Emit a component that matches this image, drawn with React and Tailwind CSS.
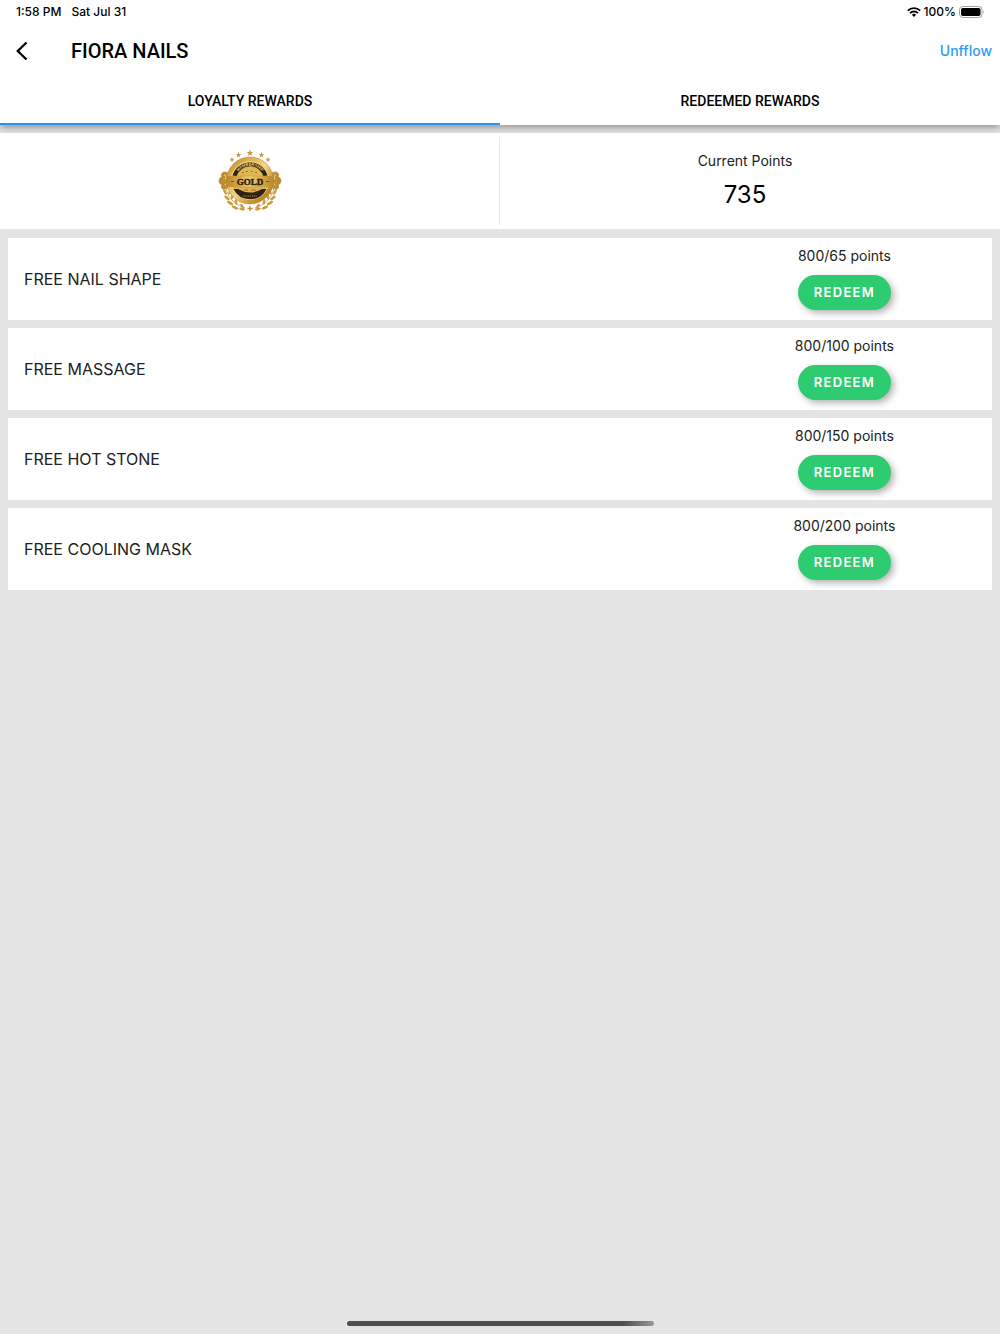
import React, { useState } from 'react';

const TABS = [
  { id: 'loyalty', label: 'LOYALTY REWARDS' },
  { id: 'redeemed', label: 'REDEEMED REWARDS' },
];

const REWARDS = [
  { name: 'FREE NAIL SHAPE', cost: 65 },
  { name: 'FREE MASSAGE', cost: 100 },
  { name: 'FREE HOT STONE', cost: 150 },
  { name: 'FREE COOLING MASK', cost: 200 },
];

const STAR = 'M0 -3.4L0.9 -1.1L3.3 -1L1.4 0.5L2.1 2.9L0 1.5L-2.1 2.9L-1.4 0.5L-3.3 -1L-0.9 -1.1Z';

// One half of the laurel, mirrored for the other side
const Laurel = () => (
  <g fill="#c99a3c">
    <path d="M8 38C9 47 15 55 27 59" fill="none" stroke="#c99a3c" strokeWidth="0.8" />
    <ellipse cx="7" cy="43" rx="1.3" ry="3" transform="rotate(-28 7 43)" />
    <ellipse cx="12" cy="43" rx="1.2" ry="2.8" transform="rotate(28 12 43)" />
    <ellipse cx="9" cy="49" rx="1.3" ry="3.2" transform="rotate(-50 9 49)" />
    <ellipse cx="14" cy="48" rx="1.2" ry="3" transform="rotate(8 14 48)" />
    <ellipse cx="12" cy="54" rx="1.3" ry="3.4" transform="rotate(-60 12 54)" />
    <ellipse cx="18" cy="53" rx="1.2" ry="2.8" transform="rotate(-12 18 53)" />
    <ellipse cx="17" cy="58.5" rx="1.3" ry="3.6" transform="rotate(-65 17 58.5)" />
    <ellipse cx="24" cy="57" rx="1.2" ry="2.6" transform="rotate(-35 24 57)" />
    <ellipse cx="24" cy="60" rx="1.2" ry="3" transform="rotate(-75 24 60)" />
  </g>
);

// Gold membership badge
const GoldBadge = () => (
  <svg className="h-16 w-16" viewBox="0 0 64 64" role="img" aria-label="Gold membership">
    <defs>
      <linearGradient id="gold" x1="0" y1="0" x2="1" y2="1">
        <stop offset="0" stopColor="#b8842a" />
        <stop offset="0.3" stopColor="#e0b654" />
        <stop offset="0.5" stopColor="#f1d588" />
        <stop offset="0.7" stopColor="#cf9d3a" />
        <stop offset="1" stopColor="#9c6b18" />
      </linearGradient>
      <linearGradient id="band" x1="0" y1="0" x2="1" y2="0">
        <stop offset="0" stopColor="#b8842a" />
        <stop offset="0.3" stopColor="#d9ab49" />
        <stop offset="0.5" stopColor="#f0cf78" />
        <stop offset="0.7" stopColor="#d9ab49" />
        <stop offset="1" stopColor="#b8842a" />
      </linearGradient>
      <path id="arc" d="M18 27.6A14.4 14.4 0 0 1 46 27.6" />
    </defs>

    <g fill="#cb963a">
      <path d={STAR} transform="translate(14 10.5) scale(0.75)" />
      <path d={STAR} transform="translate(20.5 6) scale(0.85)" />
      <path d={STAR} transform="translate(32 4)" />
      <path d={STAR} transform="translate(43.5 6) scale(0.85)" />
      <path d={STAR} transform="translate(50 10.5) scale(0.75)" />
    </g>

    <Laurel />
    <g transform="translate(64 0) scale(-1 1)">
      <Laurel />
    </g>
    <path d="M32 57v5M29.5 59.5h5" stroke="#c4922f" strokeWidth="1.4" />

    {/* side scrolls */}
    <path
      d="M10 24C5 21 2 25 4 28C0 29 0 34 4 36C2 40 6 42 11 38ZM54 24C59 21 62 25 60 28C64 29 64 34 60 36C62 40 58 42 53 38Z"
      fill="url(#band)"
      stroke="#b07c28"
      strokeWidth="0.6"
    />
    <path d="M6 26q4 2 1 4q4 2 0 6M58 26q-4 2 -1 4q-4 2 0 6" fill="none" stroke="#f7e2a3" strokeWidth="0.9" />

    <circle cx="32" cy="31.5" r="23.5" fill="url(#gold)" stroke="#b07c28" strokeWidth="0.5" />
    <circle cx="32" cy="31.5" r="19" fill="#e0b753" stroke="#f4dc98" strokeWidth="0.8" />
    <path d="M14.6 26.5A18.1 18.1 0 0 1 49.4 26.5L45.4 27.5A13.9 13.9 0 0 0 18.6 27.5Z" fill="#2b2411" />
    <path d="M15.5 40H48.5A18.4 18.4 0 0 1 15.5 40Z" fill="#2b2411" />
    <path d="M20 40Q32 47 44 40V37H20Z" fill="#deb34f" />
    <text fontSize="4" fontWeight="700" fill="#f0cf78" fontFamily="Liberation Sans, sans-serif" textAnchor="middle">
      <textPath href="#arc" startOffset="50%">MEMBERSHIP</textPath>
    </text>

    <path d="M9 27H55L57 32L55 38H9L7 32Z" fill="url(#band)" />
    <path d="M14 27H50M14 38H50" stroke="#c2923a" strokeWidth="0.5" />
    <text
      x="32"
      y="36"
      fontSize="9"
      fontWeight="700"
      fill="#2a210d"
      stroke="#2a210d"
      strokeWidth="0.4"
      textAnchor="middle"
      fontFamily="Liberation Serif, serif"
    >
      GOLD
    </text>
    <path d="M13 32.5h3M48 32.5h3" stroke="#7b5616" strokeWidth="1.2" />
    <path d="M24 23.5h2M28 22.5h2M33 22.5h2M37 23.5h2M26 41h4M33 41h5" stroke="#9a6f20" strokeWidth="0.9" />
    <path d="M25 47h14" stroke="#b18a3a" strokeWidth="0.9" strokeDasharray="1.5 0.7" />
  </svg>
);

const StatusBar = () => (
  <div className="flex h-6 items-center justify-between px-4 text-xs font-medium">
    <div className="flex gap-2.5">
      <span>1:58 PM</span>
      <span>Sat Jul 31</span>
    </div>
    <div className="flex items-center gap-[3px]">
      <svg className="h-[10px] w-[14px]" viewBox="0 0 14 10" fill="none" stroke="currentColor" strokeWidth="1.9">
        <path d="M0.8 3.7a8.8 8.8 0 0 1 12.4 0" />
        <path d="M3 6.1a5.7 5.7 0 0 1 8 0" />
        <path d="M7 10L4.9 7.8a3 3 0 0 1 4.2 0Z" fill="currentColor" stroke="none" />
      </svg>
      <span>100%</span>
      <svg className="h-3 w-[25px]" viewBox="0 0 25 12">
        <rect x="0.5" y="0.5" width="22.5" height="11" rx="3.2" fill="none" stroke="#a3a3a3" />
        <rect x="2" y="2" width="19.5" height="8" rx="1.8" fill="#000" />
        <path d="M24 4.2q1.4 1.8 0 3.6z" fill="#a3a3a3" />
      </svg>
    </div>
  </div>
);

const RewardRow = ({ name, cost }) => (
  <li className="flex h-[82px] bg-white">
    <p className="flex-1 self-center pl-4 text-base text-[#212121]">{name}</p>
    <div className="flex w-[30%] flex-col items-center gap-[9px] pt-2">
      <p className="text-sm text-[#212121]">800/{cost} points</p>
      <button
        type="button"
        className="h-[35px] rounded-full bg-[#2ecc71] px-4 text-[13px] font-semibold tracking-widest text-white shadow-[3px_3px_7px_rgba(0,0,0,0.3)]"
      >
        REDEEM
      </button>
    </div>
  </li>
);

const App = () => {
  const [activeTab, setActiveTab] = useState('loyalty');

  return (
    <div className="flex min-h-screen flex-col bg-[#e4e4e4] font-['Inter',sans-serif] text-black">
      <header className="relative bg-white shadow-[0_2px_8px_rgba(0,0,0,0.4)]">
        <StatusBar />
        <div className="flex h-[53px] items-center pr-2 pl-4">
          <button type="button" aria-label="Back" className="w-[55px]">
            <svg className="h-5 w-3" viewBox="0 0 12 20" fill="none" stroke="currentColor" strokeWidth="2.3">
              <path d="M10.5 1.5L1.8 10L10.5 18.5" />
            </svg>
          </button>
          <h1 className="flex-1 font-['Roboto',sans-serif] text-xl font-medium">FIORA NAILS</h1>
          <button type="button" className="text-sm font-medium text-[#2e9bf0]">
            Unfflow
          </button>
        </div>
        <div role="tablist" className="flex h-12 font-['Roboto',sans-serif] text-sm font-medium">
          {TABS.map((tab) => (
            <button
              key={tab.id}
              type="button"
              role="tab"
              aria-selected={activeTab === tab.id}
              onClick={() => setActiveTab(tab.id)}
              className={`flex-1 border-b-2 pt-0.5 ${activeTab === tab.id ? 'border-[#2196f3]' : 'border-transparent'}`}
            >
              {tab.label}
            </button>
          ))}
        </div>
      </header>

      <section className="relative mt-2 flex h-24 bg-white py-1">
        <div className="flex w-1/2 items-center justify-center border-r border-[#e8e8e8]">
          <GoldBadge />
        </div>
        <div className="flex w-1/2 flex-col items-center justify-center gap-2 pr-2.5">
          <p className="text-sm text-[#212121]">Current Points</p>
          <p className="text-2xl">735</p>
        </div>
      </section>

      <ul className="mx-2 mt-[9px] flex flex-col gap-2">
        {REWARDS.map((reward) => (
          <RewardRow key={reward.name} {...reward} />
        ))}
      </ul>

      {/* Home indicator */}
      <div className="mx-auto mt-auto mb-2 h-[5px] w-[307px] rounded-full bg-linear-to-r from-[#505050] from-90% to-[#999999]" />
    </div>
  );
};

export default App;
